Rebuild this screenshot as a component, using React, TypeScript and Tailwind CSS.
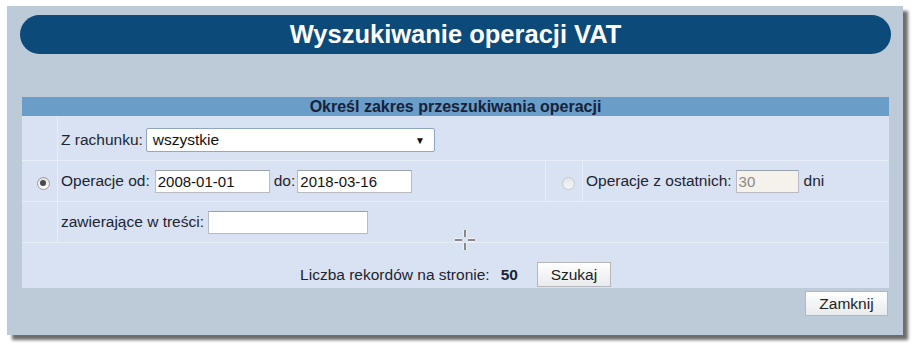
import React from 'react';

const font = { fontFamily: '"Liberation Sans", Arial, sans-serif' };

const Radio = ({ checked }: { checked?: boolean }) => (
  <span
    className={
      checked
        ? 'flex h-[13px] w-[13px] items-center justify-center rounded-full border border-[#9a9a9a] bg-gradient-to-b from-[#e2e2e2] to-[#ffffff]'
        : 'flex h-[13px] w-[13px] items-center justify-center rounded-full border border-[#c4c8cc] bg-gradient-to-b from-[#e4e6e8] to-[#f4f5f6]'
    }
  >
    {checked && <span className="h-[6px] w-[6px] rounded-full bg-[#4a4a4a]" />}
  </span>
);

const TextInput = ({
  value,
  width,
  disabled,
}: {
  value?: string;
  width: string;
  disabled?: boolean;
}) => (
  <div
    className={`${width} h-[23px] border border-[#b8bcc2] border-t-[#9da3aa] px-[2px] text-[15px] leading-[21px] ${
      disabled ? 'bg-[#f4f2ea] text-[#8a8a8a]' : 'bg-white text-[#111]'
    }`}
  >
    {value}
  </div>
);

const Button = ({ label, width }: { label: string; width: string }) => (
  <div
    className={`${width} flex h-[25px] items-center justify-center border border-[#b4b8bd] bg-gradient-to-b from-[#ffffff] to-[#e9eaec] text-[15.5px] text-[#222]`}
  >
    {label}
  </div>
);

export default function App() {
  return (
    <div className="relative h-[353px] w-[921px] bg-white text-[#1d2431]" style={font}>
      <div className="ml-[7px] pt-[6px]">
        <div className="h-[329px] w-[896px] bg-[#bdcbd9] pt-[9px] shadow-[5px_5px_3px_rgba(60,60,60,0.75)]">
          {/* Title */}
          <div className="ml-[13px] flex h-[39px] w-[871px] items-center justify-center rounded-full bg-[#0c4a79]">
            <span className="text-[25.5px] font-bold text-white">Wyszukiwanie operacji VAT</span>
          </div>

          {/* Search table */}
          <div className="ml-[15px] mt-[43px] w-[867px] bg-[#d9e2f3]">
            <div className="h-[19px] bg-[#6a9dc8] text-center text-[16px] font-bold leading-[19px] text-[#17223a]">
              Określ zakres przeszukiwania operacji
            </div>

            <div className="flex h-[44px]">
              <div className="w-[36px] border-r border-[#e8eef9]" />
              <div className="flex flex-1 items-center pl-[3px] pt-[4px] text-[15.5px]">
                <span>Z rachunku:</span>
                <div className="ml-[3px] flex h-[24px] w-[289px] items-center justify-between rounded-[2px] border border-[#8ea6c8] bg-white pl-[6px] pr-[9px] text-[15.5px] text-[#111]">
                  <span>wszystkie</span>
                  <span className="text-[10px]">▼</span>
                </div>
              </div>
            </div>

            <div className="flex h-[41px] border-t border-[#e8eef9]">
              <div className="flex w-[36px] items-center justify-center border-r border-[#e8eef9] pl-[7px] pt-[4px]">
                <Radio checked />
              </div>
              <div className="flex w-[488px] items-center border-r border-[#e8eef9] pl-[3px] text-[15.5px]">
                <span>Operacje od:</span>
                <div className="ml-[5px]">
                  <TextInput value="2008-01-01" width="w-[115px]" />
                </div>
                <span className="ml-[4px]">do:</span>
                <div className="ml-[2px]">
                  <TextInput value="2018-03-16" width="w-[115px]" />
                </div>
              </div>
              <div className="flex w-[37px] items-center justify-center border-r border-[#e8eef9] pl-[8px] pt-[4px]">
                <Radio />
              </div>
              <div className="flex flex-1 items-center pl-[3px] text-[15.5px]">
                <span>Operacje z ostatnich:</span>
                <div className="ml-[4px]">
                  <TextInput value="30" width="w-[63px]" disabled />
                </div>
                <span className="ml-[5px]">dni</span>
              </div>
            </div>

            <div className="flex h-[41px] border-t border-[#e8eef9]">
              <div className="w-[36px] border-r border-[#e8eef9]" />
              <div className="flex flex-1 items-center pl-[3px] text-[15.5px]">
                <span>zawierające w treści:</span>
                <div className="ml-[4px]">
                  <TextInput width="w-[160px]" />
                </div>
              </div>
            </div>

            <div className="flex h-[46px] items-end justify-center border-t border-[#e8eef9] pb-[1px] text-[15.5px]">
              <div className="flex items-center">
                <span>Liczba rekordów na stronie:</span>
                <span className="ml-[11px] font-bold">50</span>
                <div className="ml-[19px]">
                  <Button label="Szukaj" width="w-[74px]" />
                </div>
              </div>
            </div>
          </div>

          <div className="mt-[3px] flex justify-end pr-[15px]">
            <Button label="Zamknij" width="w-[83px]" />
          </div>
        </div>
      </div>

      {/* cursor crosshair */}
      <svg className="absolute left-[454px] top-[229px]" width="22" height="22" viewBox="0 0 22 22">
        <path d="M11 1v7M11 14v7M1 11h7M14 11h7" stroke="#fff" strokeWidth="3" />
        <path d="M11 1v7M11 14v7M1 11h7M14 11h7" stroke="#111" strokeWidth="1" />
      </svg>
    </div>
  );
}
